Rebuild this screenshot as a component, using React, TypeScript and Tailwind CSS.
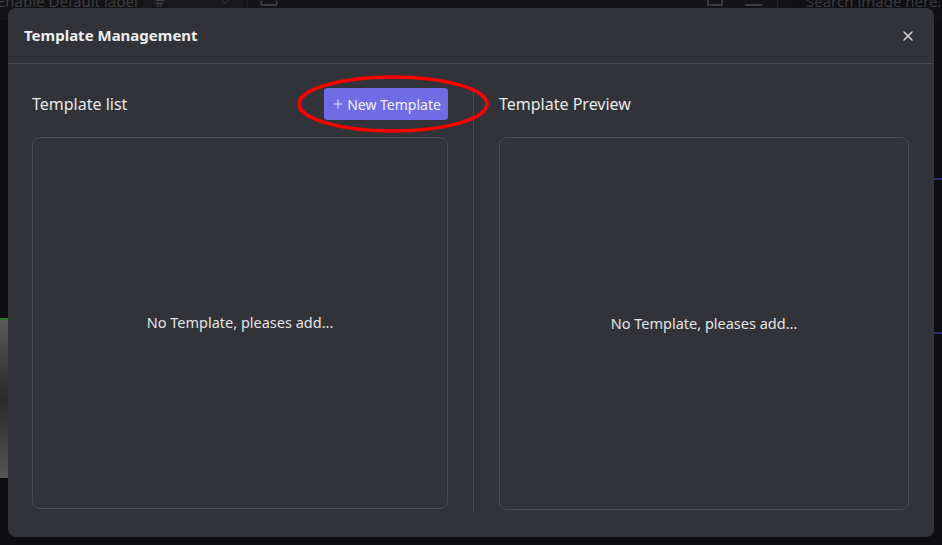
import { Plus, X, ChevronDown } from "lucide-react"

function Backdrop() {
  return (
    <div className="flex h-[545px] w-[942px] flex-col overflow-hidden bg-[#0e0e10]">
      <div className="flex h-[20px] shrink-0 items-start overflow-hidden whitespace-nowrap bg-[#141416] text-[15px] leading-none text-[#3c3c41]">
        <span className="ml-[-3px] mt-[-6px] w-[146px] shrink-0">Enable Default label</span>
        <div className="flex h-full w-[100px] shrink-0 items-start justify-between bg-[#19191c] px-3">
          <span className="mt-[-6px]">#</span>
          <ChevronDown className="mt-[-4px] h-3 w-3" />
        </div>
        <div className="ml-[4px] h-full w-px bg-[#222226]" />
        <div className="ml-[12px] h-[6px] w-[18px] rounded-sm border-2 border-t-0 border-[#3a3a3f]" />
        <div className="flex-1" />
        <div className="h-[6px] w-[16px] border-2 border-t-0 border-[#3a3a3f]" />
        <div className="ml-[22px] h-[6px] w-[18px] border-b-2 border-[#3a3a3f]" />
        <div className="ml-[14px] h-full w-px bg-[#222226]" />
        <div className="ml-[14px] h-full w-[150px] shrink-0 bg-[#111113] pl-[14px]">
          <span className="mt-[-6px] block text-[#3a3a3f]">Search image here...</span>
        </div>
      </div>
      <div className="flex flex-1">
        <div className="mt-[298px] h-[160px] w-[8px] border-t-2 border-[#1c7a1c] bg-gradient-to-b from-[#5a5a5a] via-[#2a2a2a] to-[#555]" />
        <div className="flex-1" />
        <div className="flex w-[8px] flex-col">
          <div className="mt-[158px] h-[2px] bg-[#2c2a70]" />
          <div className="mt-[152px] h-[2px] bg-[#2c2a70]" />
        </div>
      </div>
    </div>
  )
}

function EmptyBox({ className }: { className: string }) {
  return (
    <div className={`flex items-center justify-center rounded-lg border border-[#4a4b51] ${className}`}>
      <span className="text-[14.5px] text-[#e4e4e6]">No Template, pleases add...</span>
    </div>
  )
}

export default function App() {
  return (
    <div className="relative h-[545px] w-[942px] overflow-hidden" style={{ fontFamily: '"Noto Sans", sans-serif' }}>
      <Backdrop />

      <div className="absolute left-[8px] top-[8px] flex h-[529px] w-[926px] flex-col rounded-lg bg-[#323338]">
        <div className="flex h-[56px] shrink-0 items-center justify-between border-b border-[#46474c] pl-[16px] pr-[18px]">
          <h2 className="text-[15px] font-bold text-[#eceef2]">Template Management</h2>
          <X className="h-[16px] w-[16px] text-[#d4d4d8]" strokeWidth={2.3} />
        </div>

        <div className="flex flex-1 pl-[24px] pr-[25px] pt-[24px]">
          <div className="flex w-[416px] flex-col">
            <div className="flex h-[32px] items-center justify-between">
              <span className="text-[16px] text-[#e8e8ea]">Template list</span>
              <button className="flex h-[32px] w-[124px] items-center justify-center gap-[2px] rounded bg-[#706ce6] text-[14px] text-[#f0f0ff]">
                <Plus className="h-[14px] w-[14px]" strokeWidth={1.6} />
                New Template
              </button>
            </div>
            <EmptyBox className="mt-[17px] h-[372px]" />
          </div>

          <div className="mx-[25px] mb-[24px] w-px bg-[#46474c]" />

          <div className="flex w-[410px] flex-col">
            <div className="flex h-[32px] items-center">
              <span className="text-[16px] text-[#e8e8ea]">Template Preview</span>
            </div>
            <EmptyBox className="mt-[17px] h-[373px]" />
          </div>
        </div>
      </div>

      <svg className="absolute left-[296px] top-[74px]" width="194" height="60" viewBox="0 0 194 60">
        <ellipse cx="97" cy="30" rx="94" ry="27" fill="none" stroke="#ff0000" strokeWidth="3.5" />
      </svg>
    </div>
  )
}
